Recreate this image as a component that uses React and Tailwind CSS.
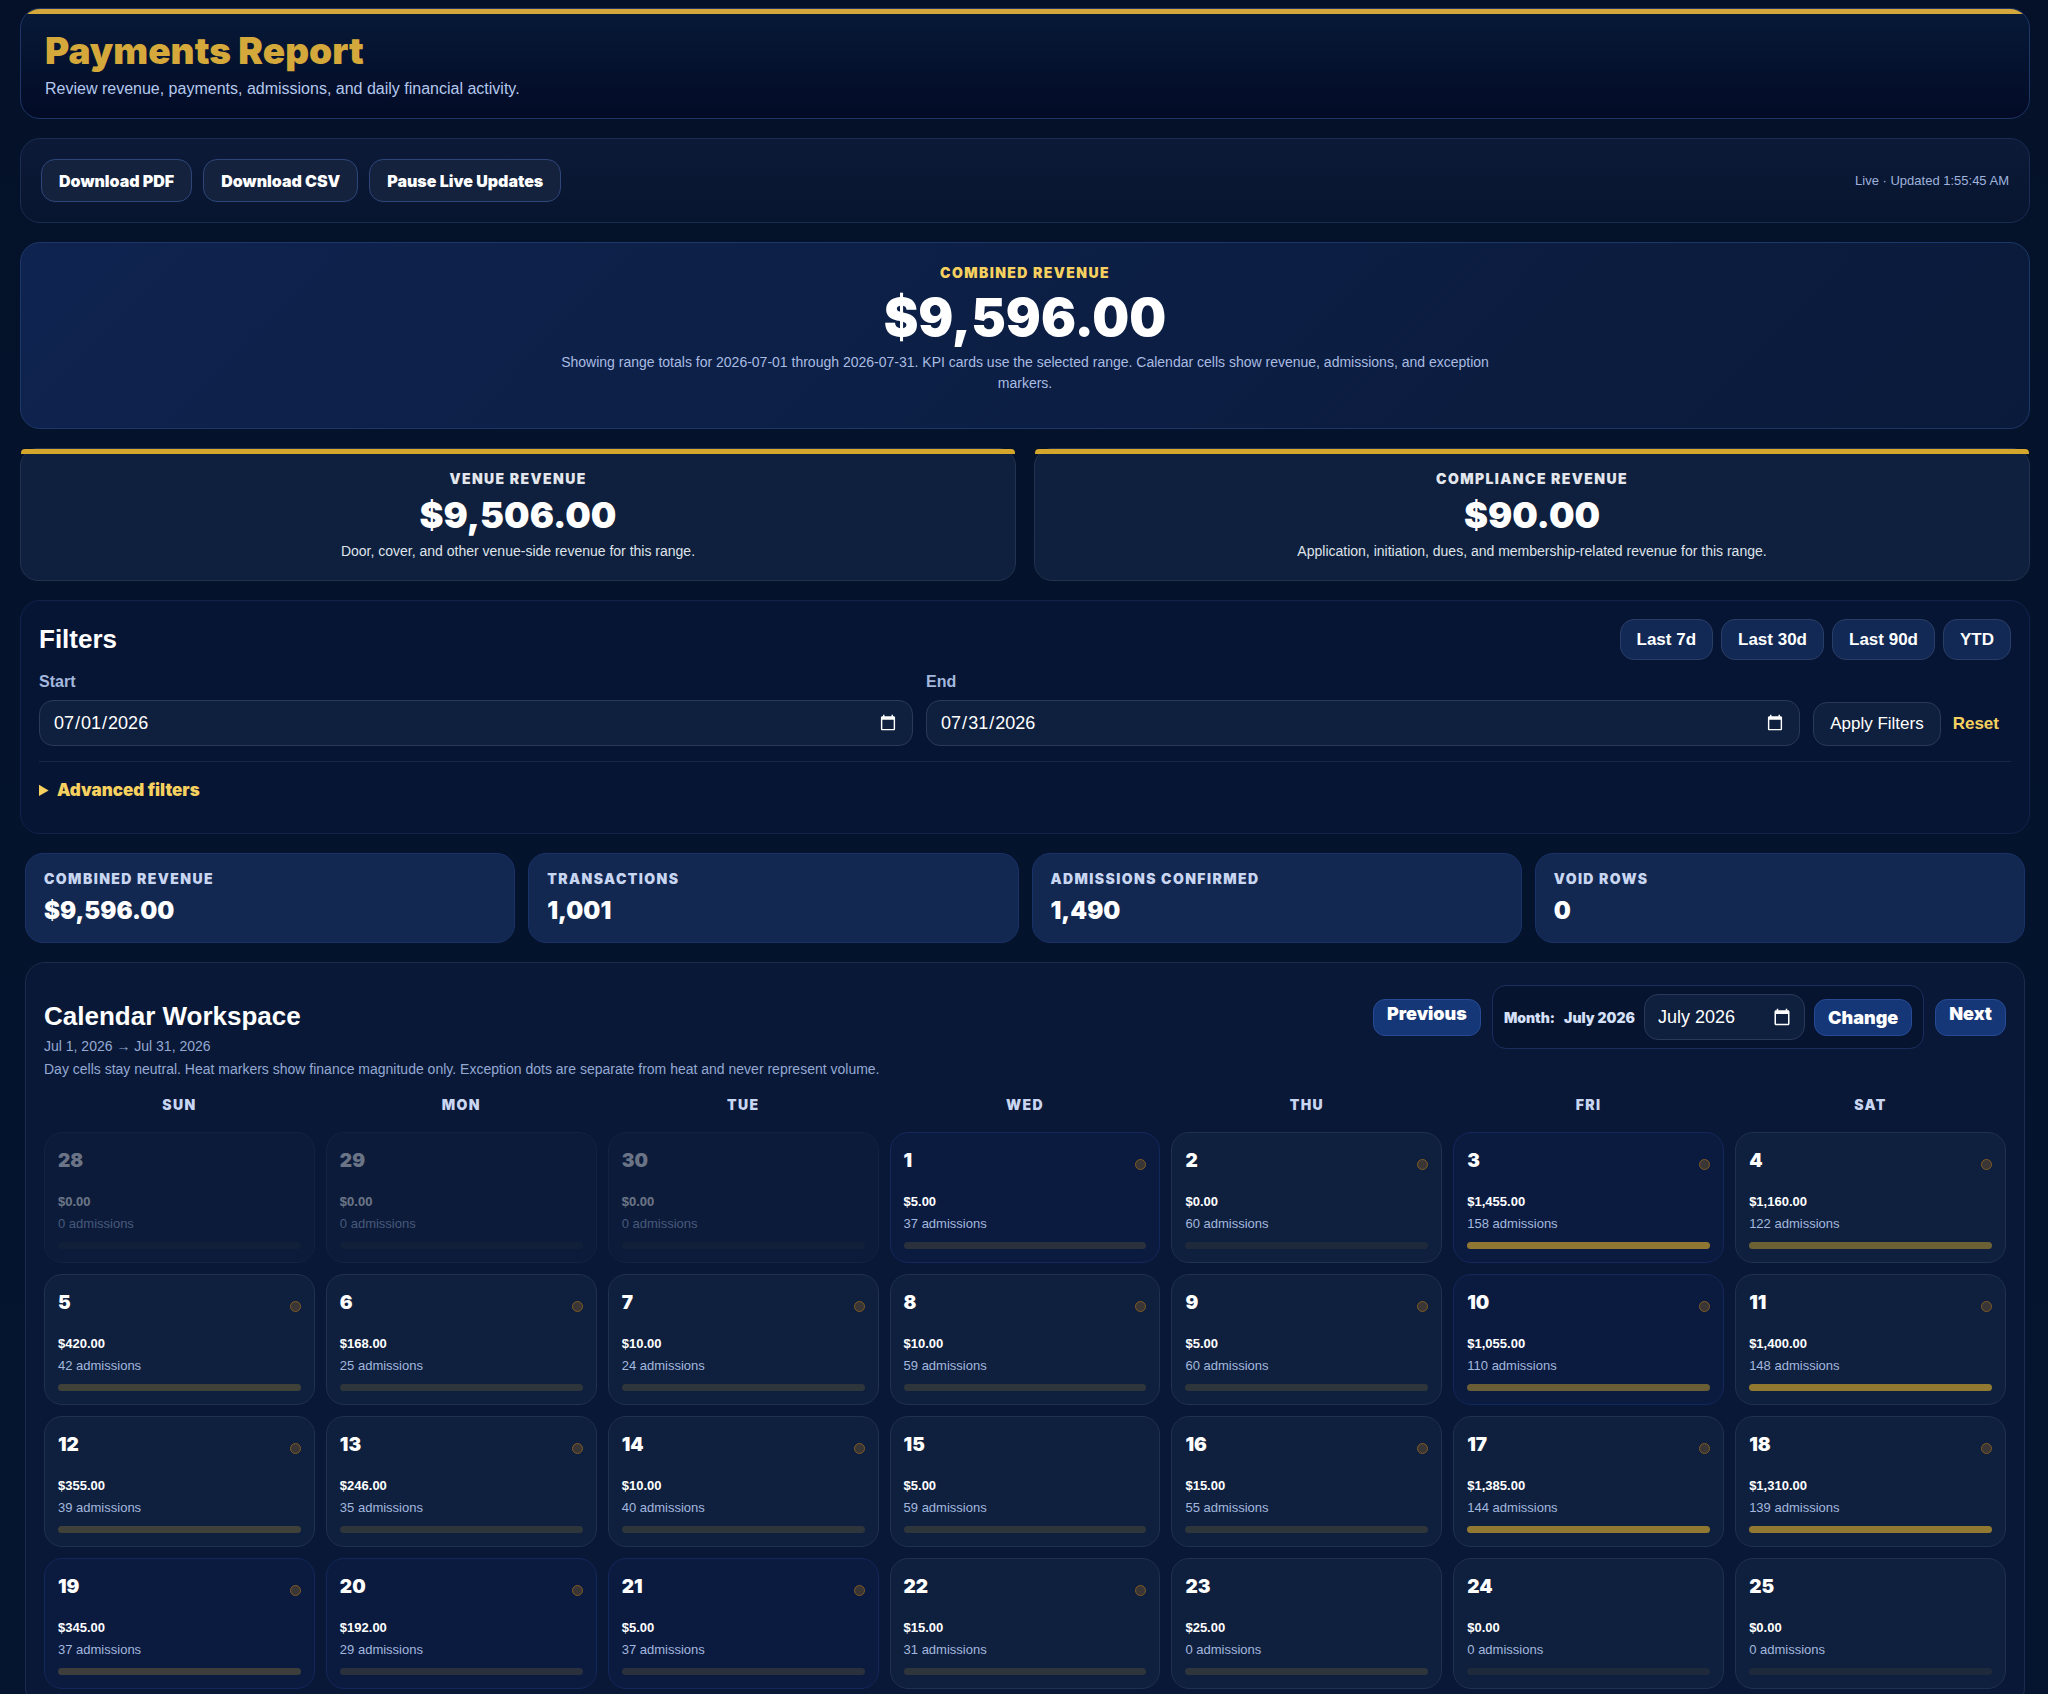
import { useState } from 'react';

const weekdays = ['Sun', 'Mon', 'Tue', 'Wed', 'Thu', 'Fri', 'Sat'];

// [day, revenue, admissions, heat level, flags: m = outside month, a = accent, x = exception]
const days = [
  [28, '$0.00', 0, 0, 'm'],
  [29, '$0.00', 0, 0, 'm'],
  [30, '$0.00', 0, 0, 'm'],
  [1, '$5.00', 37, 1, 'ax'],
  [2, '$0.00', 60, 0, 'x'],
  [3, '$1,455.00', 158, 4, 'ax'],
  [4, '$1,160.00', 122, 3, 'x'],
  [5, '$420.00', 42, 2, 'x'],
  [6, '$168.00', 25, 1, 'x'],
  [7, '$10.00', 24, 1, 'x'],
  [8, '$10.00', 59, 1, 'x'],
  [9, '$5.00', 60, 1, 'x'],
  [10, '$1,055.00', 110, 3, 'ax'],
  [11, '$1,400.00', 148, 4, 'x'],
  [12, '$355.00', 39, 2, 'x'],
  [13, '$246.00', 35, 1, 'x'],
  [14, '$10.00', 40, 1, 'x'],
  [15, '$5.00', 59, 1, ''],
  [16, '$15.00', 55, 1, 'x'],
  [17, '$1,385.00', 144, 4, 'x'],
  [18, '$1,310.00', 139, 4, 'x'],
  [19, '$345.00', 37, 2, 'ax'],
  [20, '$192.00', 29, 1, 'ax'],
  [21, '$5.00', 37, 1, 'ax'],
  [22, '$15.00', 31, 1, 'x'],
  [23, '$25.00', 0, 1, ''],
  [24, '$0.00', 0, 0, ''],
  [25, '$0.00', 0, 0, ''],
];

const heat = [
  'bg-[#d4a72c]/8',
  'bg-[#d4a72c]/16',
  'bg-[#d4a72c]/25',
  'bg-[#d4a72c]/48',
  'bg-[#d4a72c]/66',
];

const kpis = [
  { label: 'Combined Revenue', value: '$9,596.00' },
  { label: 'Transactions', value: '1,001' },
  { label: 'Admissions Confirmed', value: '1,490' },
  { label: 'Void Rows', value: '0' },
];

const CalendarIcon = () => (
  <svg viewBox="0 0 24 24" className="size-[18px] fill-white" aria-hidden="true">
    <path d="M20 3h-1V1h-2v2H7V1H5v2H4c-1.1 0-2 .9-2 2v16c0 1.1.9 2 2 2h16c1.1 0 2-.9 2-2V5c0-1.1-.9-2-2-2zm0 18H4V8h16v13z" />
  </svg>
);

const RevenueCard = ({ label, value, text }) => (
  <article className="relative rounded-[18px] border border-[#23324f] bg-[#0f203e] pt-[21px] pb-[19px] text-center">
    <div className="absolute inset-x-0 top-0 h-[5px] rounded-t-[4px] bg-[#d4a72c]" />
    <h2 className="font-[Inter,sans-serif] text-[14px] leading-[18px] font-black tracking-widest text-[#e3e6ec] uppercase">{label}</h2>
    <p className="mt-[5px] font-[Inter,sans-serif] text-[36px] leading-[44px] font-black text-white">{value}</p>
    <p className="mt-[4px] text-[14px] leading-[20px] text-[#dfe3ea]">{text}</p>
  </article>
);

const DayCell = ({ day }) => {
  const [num, revenue, admissions, level, flags] = day;
  const tone = flags.includes('a') ? 'border-[#14275a] bg-[#0b1b40]' : 'border-[#203150] bg-[#0f203e]';
  const muted = flags.includes('m') ? 'opacity-40' : '';

  return (
    <button type="button" className={`block h-[131px] rounded-[18px] border px-[13px] text-left ${tone} ${muted}`}>
      <span className="flex h-[30px] items-center justify-between">
        <span className="font-[Inter,sans-serif] text-[19px] font-black text-white">{num}</span>
        {flags.includes('x') && <span className="mt-[5px] size-[11px] rounded-full border border-[#7f5a22] bg-[#3a3635]" />}
      </span>
      <span className="mt-[16px] block text-[13px] leading-[18px] font-bold text-white">{revenue}</span>
      <span className="mt-[4px] block text-[13px] leading-[18px] text-[#a3b8de]">{admissions} admissions</span>
      <span className={`mt-[9px] block h-[7px] rounded-full ${heat[level]}`} />
    </button>
  );
};

const App = () => {
  const [start, setStart] = useState('2026-07-01');
  const [end, setEnd] = useState('2026-07-31');
  const [month, setMonth] = useState('July 2026');

  const field = 'h-[46px] rounded-[14px] border border-[#28395a] bg-[#0f203e] px-[13px] text-[18px] text-white outline-none [color-scheme:dark]';
  const toolButton = 'h-[43px] rounded-[14px] border border-[#2d4679] bg-[#14223e] px-[17px] font-[Inter,sans-serif] text-[16px] font-black text-white';
  const rangeButton = 'h-[41px] rounded-[14px] border border-[#2a3d66] bg-[#122955] px-[16px] text-[17px] font-bold text-white';
  const navButton = 'h-[37px] rounded-[12px] border border-[#274a94] bg-[#163777] px-[13px] font-[Inter,sans-serif] text-[18px] font-black text-white';

  return (
    <div className="min-h-screen bg-linear-to-b from-[#041129] to-[#051530] font-['Liberation_Sans',Arial,sans-serif]">
      <main className="flex flex-col gap-[19px] pt-[8px] pr-[18px] pb-[19px] pl-[20px]">
        <header className="overflow-hidden rounded-[20px] border border-[#1e3566] bg-linear-to-b from-[#071a38] to-[#030b26]">
          <div className="h-[5px] bg-[#d4a83a]" />
          <div className="px-[24px] pt-[15px] pb-[17px]">
            <h1 className="font-[Inter,sans-serif] text-[37px] leading-[44px] font-black text-[#d4a83a]">Payments Report</h1>
            <p className="mt-[4px] text-[16px] leading-[24px] text-[#b5c8ee]">Review revenue, payments, admissions, and daily financial activity.</p>
          </div>
        </header>

        <section className="flex items-center justify-between rounded-[20px] border border-[#1a2c52] bg-linear-to-b from-[#0c1a38] to-[#08152f] px-[20px] py-[20px]">
          <div className="flex gap-[11px]">
            <button type="button" className={toolButton}>Download PDF</button>
            <button type="button" className={toolButton}>Download CSV</button>
            <button type="button" className={toolButton}>Pause Live Updates</button>
          </div>
          <p className="text-[13px] text-[#9fb3dd]">Live · Updated 1:55:45 AM</p>
        </section>

        <section className="rounded-[20px] border border-[#1e3769] bg-linear-135 from-[#0e234f] to-[#0a1a3a] pt-[20px] pb-[34px] text-center">
          <h2 className="font-[Inter,sans-serif] text-[14px] leading-[20px] font-black tracking-widest text-[#f7d15f] uppercase">Combined Revenue</h2>
          <p className="mt-[5px] font-[Inter,sans-serif] text-[52px] leading-[60px] font-black text-white">$9,596.00</p>
          <p className="mx-auto mt-[4px] max-w-[950px] text-[14px] leading-[21px] text-[#a9bce2]">
            Showing range totals for 2026-07-01 through 2026-07-31. KPI cards use the selected range. Calendar cells show revenue, admissions, and exception markers.
          </p>
        </section>

        <section className="grid grid-cols-2 gap-[18px]">
          <RevenueCard label="Venue Revenue" value="$9,506.00" text="Door, cover, and other venue-side revenue for this range." />
          <RevenueCard label="Compliance Revenue" value="$90.00" text="Application, initiation, dues, and membership-related revenue for this range." />
        </section>

        <section className="rounded-[20px] border border-[#12224d] bg-[#071534] px-[18px] pt-[18px] pb-[31px]">
          <div className="flex items-center justify-between">
            <h2 className="text-[26px] font-bold text-white">Filters</h2>
            <div className="flex gap-[8px]">
              <button type="button" className={rangeButton}>Last 7d</button>
              <button type="button" className={rangeButton}>Last 30d</button>
              <button type="button" className={rangeButton}>Last 90d</button>
              <button type="button" className={rangeButton}>YTD</button>
            </div>
          </div>
          <form className="mt-[12px] flex items-end gap-[13px] border-b border-[#182746] pb-[15px]" onSubmit={(e) => e.preventDefault()}>
            <label className="flex flex-1 flex-col gap-[8px] text-[16px] leading-[20px] font-bold text-[#a3b8de]">
              Start
              <input type="date" value={start} onChange={(e) => setStart(e.target.value)} className={`font-normal ${field}`} />
            </label>
            <label className="flex flex-1 flex-col gap-[8px] text-[16px] leading-[20px] font-bold text-[#a3b8de]">
              End
              <input type="date" value={end} onChange={(e) => setEnd(e.target.value)} className={`font-normal ${field}`} />
            </label>
            <div className="flex items-center">
              <button type="submit" className="h-[44px] rounded-[14px] border border-[#28395a] bg-[#0f203e] px-[16px] text-[17px] text-white">Apply Filters</button>
              <a href="#reset" className="px-[12px] text-[17px] font-bold text-[#f7d15f]">Reset</a>
            </div>
          </form>
          <details className="mt-[16px]">
            <summary className="font-[Inter,sans-serif] text-[17px] leading-[24px] font-black text-[#f7d15f]">Advanced filters</summary>
          </details>
        </section>

        <section className="grid grid-cols-4 gap-[13px] px-[5px]">
          {kpis.map((kpi) => (
            <article key={kpi.label} className="h-[90px] rounded-[18px] border border-[#193268] bg-[#122851] px-[18px] pt-[16px]">
              <h3 className="font-[Inter,sans-serif] text-[14px] leading-[18px] font-black tracking-widest text-[#c9d6f2] uppercase">{kpi.label}</h3>
              <p className="mt-[8px] font-[Inter,sans-serif] text-[24px] leading-[30px] font-black text-white">{kpi.value}</p>
            </article>
          ))}
        </section>

        <section className="mx-[5px] rounded-[20px] border border-[#1c2c4c] bg-[#091836] px-[18px] pt-[22px] pb-[18px]">
          <div className="flex items-start justify-between">
            <div className="pt-[14px]">
              <h2 className="text-[26px] leading-[34px] font-bold text-white">Calendar Workspace</h2>
              <p className="mt-[3px] text-[14px] leading-[20px] text-[#94a9d3]">Jul 1, 2026 → Jul 31, 2026</p>
              <p className="mt-[3px] text-[14px] leading-[20px] text-[#94a9d3]">
                Day cells stay neutral. Heat markers show finance magnitude only. Exception dots are separate from heat and never represent volume.
              </p>
            </div>
            <div className="flex items-center gap-[11px]">
              <button type="button" className={`pb-[8px] ${navButton}`}>Previous</button>
              <form className="flex items-center gap-[9px] rounded-[14px] border border-[#1b2d5c] bg-[#061430] px-[11px] py-[8px]" onSubmit={(e) => e.preventDefault()}>
                <label htmlFor="month" className="flex gap-[9px] font-[Inter,sans-serif] text-[14px] font-black text-[#d5e0f8]">
                  <span>Month:</span>
                  <span>July 2026</span>
                </label>
                <div className={`flex w-[161px] items-center justify-between ${field}`}>
                  <input id="month" type="text" value={month} onChange={(e) => setMonth(e.target.value)} className="w-[90px] outline-none" />
                  <CalendarIcon />
                </div>
                <button type="submit" className={navButton}>Change</button>
              </form>
              <button type="button" className={`pb-[8px] ${navButton}`}>Next</button>
            </div>
          </div>

          <div className="mt-[16px] grid grid-cols-7 gap-x-[11px] text-center">
            {weekdays.map((day) => (
              <div key={day} className="font-[Inter,sans-serif] text-[14px] leading-[20px] font-black tracking-widest text-[#c9d6f2] uppercase">{day}</div>
            ))}
          </div>
          <div className="mt-[17px] grid grid-cols-7 gap-[11px]">
            {days.map((day) => (
              <DayCell key={day[0]} day={day} />
            ))}
          </div>
        </section>
      </main>
    </div>
  );
};

export default App;
